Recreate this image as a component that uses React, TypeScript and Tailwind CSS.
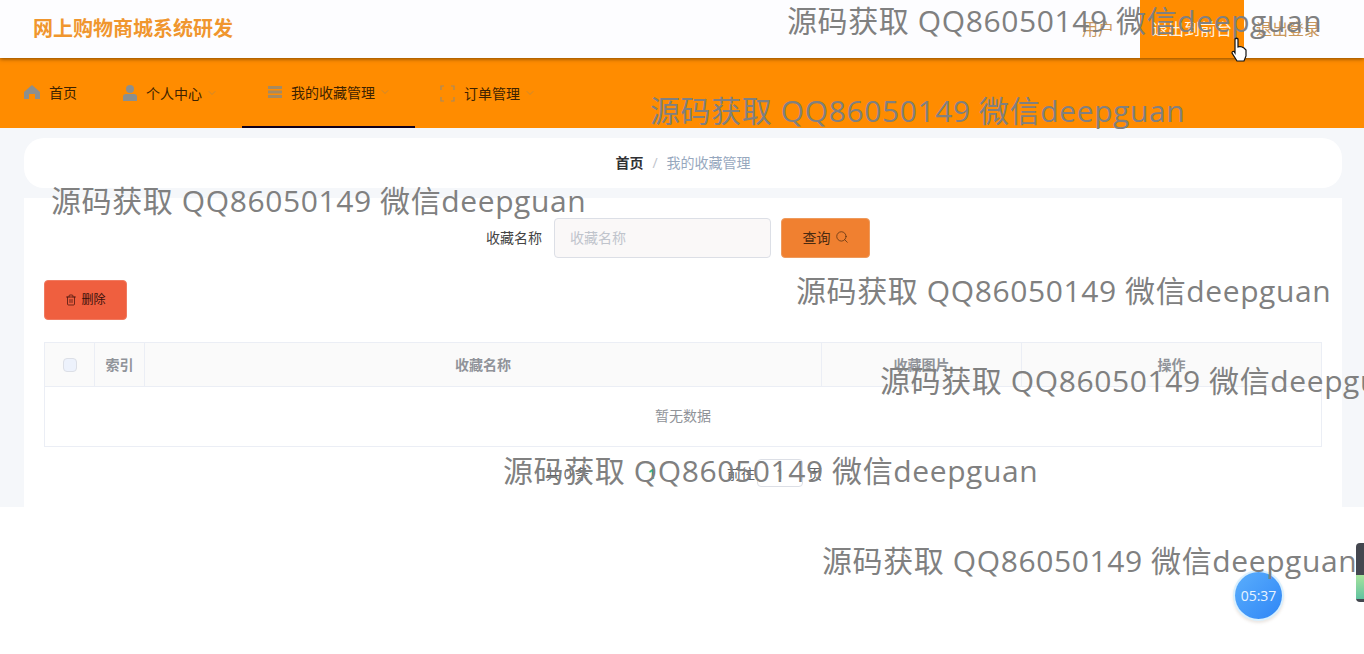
import { ChevronDown, Search, Trash2 } from 'lucide-react'

const font = { fontFamily: '"Open Sans", "Noto Sans CJK SC", sans-serif' }

const marks = [
  'left-[787px] top-[1px]',
  'left-[650px] top-[91px]',
  'left-[51px] top-[181px]',
  'left-[796px] top-[271px]',
  'left-[880px] top-[361px]',
  'left-[503px] top-[451px]',
  'left-[822px] top-[541px]',
]

function Watermark({ pos }: { pos: string }) {
  return (
    <div className={`absolute z-20 ${pos} whitespace-nowrap text-[30px] leading-[40px] tracking-[0.6px] text-[#808080] pointer-events-none`}>
      源码获取 QQ86050149 微信deepguan
    </div>
  )
}

function HomeIcon() {
  return (
    <svg width="16" height="16" viewBox="0 0 16 16" className="fill-[#8c8f8f]">
      <path d="M8 1 L16 8 V15 H11 V10 H5 V15 H0 V8 Z" />
    </svg>
  )
}

function UserIcon() {
  return (
    <svg width="16" height="16" viewBox="0 0 16 16" className="fill-[#8c8f8f]">
      <circle cx="8" cy="4" r="4" />
      <path d="M1 16 V12 Q1 9 4 9 H12 Q15 9 15 12 V16 Z" />
    </svg>
  )
}

function ListIcon() {
  return (
    <svg width="16" height="16" viewBox="0 0 16 16" className="fill-[#a58a62]">
      <rect x="1" y="2" width="14" height="3" />
      <rect x="1" y="6.5" width="14" height="3" />
      <rect x="1" y="11" width="14" height="3" />
    </svg>
  )
}

function FrameIcon() {
  return (
    <svg width="17" height="17" viewBox="0 0 17 17" fill="none" stroke="#a58a62" strokeWidth="1.2">
      <path d="M2 5 V1 H5 M12 1 H15 V5 M15 12 V16 H12 M5 16 H2 V12" />
    </svg>
  )
}

function HandCursor() {
  return (
    <svg width="16" height="25" viewBox="0 0 16 25" className="absolute z-30 left-[1231px] top-[37px]">
      <path
        d="M4 2 Q5.5 0.5 7 2 V10 L9 9.5 L11 10 L13 11 L15 13 V19 L13 24 H6 L1 16 Q1 14 3 14.5 L4 16 Z"
        fill="#fff"
        stroke="#111"
        strokeWidth="1.2"
      />
    </svg>
  )
}

function NavItem({ icon, label, active, arrow }: { icon: React.ReactNode; label: string; active?: boolean; arrow?: boolean }) {
  return (
    <div className={`h-[70px] flex items-center pr-6 ${active ? 'pl-[25px] border-b-2 border-[#10001a]' : 'pl-6'}`}>
      {icon}
      <span className="ml-2 text-[14px] text-[#3d2200]">{label}</span>
      {arrow && <ChevronDown size={12} className="ml-1 text-[#c98a33]" />}
    </div>
  )
}

export default function App() {
  return (
    <div className="relative min-h-[654px] bg-white overflow-hidden" style={font}>
      {/* Top bar */}
      <div className="relative z-10 h-[58px] flex items-center justify-between bg-[#fdfdff] pl-[33px] pr-[42px] shadow-[0_1px_4px_rgba(80,45,0,0.7)]">
        <div className="text-[20px] font-bold text-[#f0962e]">网上购物商城系统研发</div>
        <div className="flex items-stretch h-full text-[16px] text-[#c8965a]">
          <span className="flex items-center mr-[26px]">用户</span>
          <span className="flex items-center w-[104px] justify-center bg-[#ff8c00] text-[#fff3e0]">退出到前台</span>
          <span className="flex items-center ml-[12px] w-[66px] whitespace-nowrap">退出登录</span>
        </div>
      </div>

      {/* Nav */}
      <div className="h-[70px] flex bg-[#ff8c00]">
        <div className="h-[70px] flex items-center pl-6 pr-[21px] pb-[2px]">
          <HomeIcon />
          <span className="ml-[9px] text-[14px] text-[#3d2200]">首页</span>
        </div>
        <NavItem icon={<UserIcon />} label="个人中心" arrow />
        <NavItem icon={<ListIcon />} label="我的收藏管理" active arrow />
        <NavItem icon={<FrameIcon />} label="订单管理" arrow />
      </div>

      {/* Page body */}
      <div className="h-[379px] bg-[#f5f7fa] px-6 pt-[10px]">
        <div className="h-[50px] mr-[-2px] pb-[2px] rounded-[20px] bg-white flex items-center justify-center text-[14px]">
          <span className="font-semibold text-[#303133]">首页</span>
          <span className="mx-[9px] text-[#c0c4cc]">/</span>
          <span className="text-[#97a8be]">我的收藏管理</span>
        </div>

        <div className="mt-[10px] mr-[-2px] h-[309px] bg-white px-5 pt-5">
          {/* Search */}
          <div className="flex items-center justify-center h-10 pr-[10px]">
            <span className="mr-3 pb-[2px] text-[14px] text-[#444]">收藏名称</span>
            <div className="w-[217px] h-10 flex items-center px-[15px] pb-[2px] rounded border border-[#dcdfe6] bg-[#faf8f8] text-[14px] text-[#c0c4cc]">
              收藏名称
            </div>
            <div className="ml-[10px] w-[89px] h-10 flex items-center justify-center pb-[2px] rounded bg-[#f08030] border border-[#ee9a5c] text-[14px] text-[#4a2a10]">
              查询
              <Search size={14} strokeWidth={1.2} className="ml-1" />
            </div>
          </div>

          {/* Actions */}
          <div className="mt-[22px]">
            <div className="w-[83px] h-10 flex items-center justify-center rounded bg-[#ef5f3f] border border-[#f07a60] text-[12px] text-[#3a100a]">
              <Trash2 size={12} strokeWidth={1.4} className="mr-1" />
              删除
            </div>
          </div>

          {/* Table */}
          <div className="mt-[22px] border border-[#ebeef5]">
            <div className="flex h-[44px] bg-[#fafafa] border-b border-[#ebeef5] text-[14px] font-bold text-[#909399]">
              <div className="w-[50px] flex items-center justify-center border-r border-[#ebeef5]">
                <div className="w-[14px] h-[14px] rounded-sm border border-[#dcdfe6] bg-[#edf2fc]" />
              </div>
              <div className="w-[50px] flex items-center justify-center border-r border-[#ebeef5]">索引</div>
              <div className="w-[677px] flex items-center justify-center border-r border-[#ebeef5]">收藏名称</div>
              <div className="w-[200px] flex items-center justify-center border-r border-[#ebeef5]">收藏图片</div>
              <div className="flex-1 flex items-center justify-center">操作</div>
            </div>
            <div className="h-[59px] pb-[2px] flex items-center justify-center text-[14px] text-[#909399]">暂无数据</div>
          </div>

          {/* Pagination */}
          <div className="mt-[12px] h-7 flex items-center text-[14px] text-[#606266]">
            <span className="ml-[502px] w-[42px] whitespace-nowrap">共 0 条</span>
            <span className="ml-[60px] w-2 text-[#2fb38c] font-bold">1</span>
            <span className="ml-[71px]">前往</span>
            <div className="ml-[2px] w-[46px] h-7 flex items-center justify-center rounded border border-[#dcdfe6]">1</div>
            <span className="ml-[5px]">页</span>
          </div>
        </div>
      </div>

      {/* Timer bubble */}
      <div className="absolute left-[1235px] top-[572px] w-[47px] h-[47px] rounded-full bg-gradient-to-br from-[#5aaefc] to-[#2f86f6] flex items-center justify-center text-[14px] text-[#e8f4ff] shadow-[0_0_0_2px_#d8f0ff,0_2px_3px_2px_rgba(120,90,60,0.15)]">
        05:37
      </div>

      {/* Side widget */}
      <div className="absolute left-[1356px] top-[543px] w-2 h-[59px] rounded-l bg-[#44474f] overflow-hidden flex flex-col justify-end">
        <div className="h-[24px] bg-gradient-to-b from-[#a6e39c] to-[#5fc3a0] mb-[3px]" />
      </div>

      {marks.map((m) => (
        <Watermark key={m} pos={m} />
      ))}

      <HandCursor />
    </div>
  )
}
